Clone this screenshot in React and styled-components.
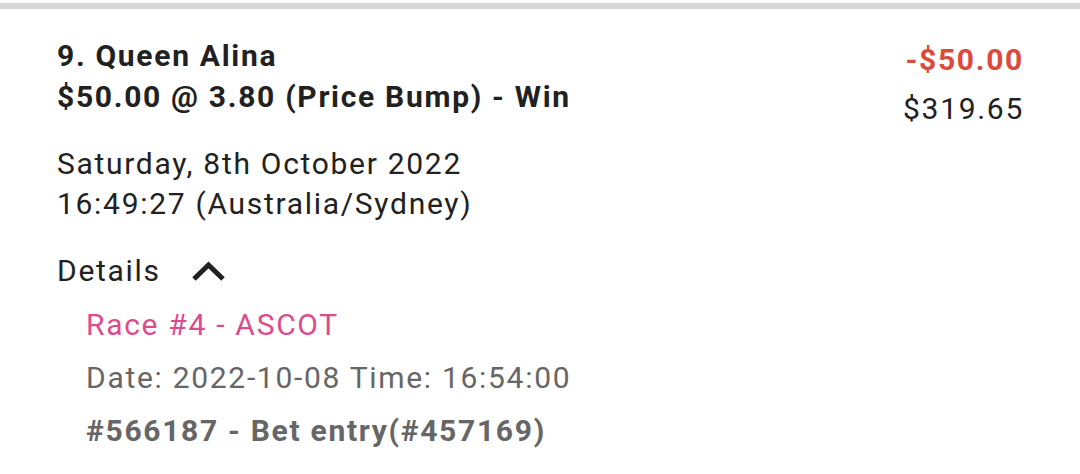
import React from 'react'
import styled, { createGlobalStyle } from 'styled-components'

const GlobalStyle = createGlobalStyle`
  html, body {
    margin: 0;
    padding: 0;
    background: #fff;
  }
  body {
    font-family: Roboto, 'Liberation Sans', sans-serif;
    font-size: 30px;
    letter-spacing: 1.7px;
    color: #212121;
  }
`

const Card = styled.div`
  margin-top: 3px;
  border-top: 6px solid #d6d6d6;
  padding: 26px 56px 0 57px;
`

const Header = styled.div`
  display: flex;
  justify-content: space-between;
  align-items: flex-start;
`

const Title = styled.div`
  font-weight: 700;
  line-height: 41px;
`

const Amounts = styled.div`
  display: flex;
  flex-direction: column;
  align-items: flex-end;
  line-height: 49px;
`

const Amount = styled.span`
  color: ${(p) => (p.loss ? '#db4a3c' : '#212121')};
  font-weight: ${(p) => (p.loss ? 700 : 400)};
`

const Placed = styled.div`
  margin-top: 11px;
  line-height: 40px;
`

const Toggle = styled.div`
  display: flex;
  align-items: center;
  gap: 30px;
  margin-top: 28px;
  line-height: 38px;
`

const Chevron = () => (
  <svg width='35' height='22' viewBox='0 0 35 22'>
    <polyline
      points='3,19 17.5,5 32,19'
      fill='none'
      stroke='#212121'
      strokeWidth='5'
    />
  </svg>
)

const DetailList = styled.div`
  padding-left: 29px;
  margin-top: 8px;
`

const DetailLine = styled.div`
  line-height: 53px;
  color: ${(p) => (p.accent ? '#dc4b8d' : '#666')};
  font-weight: ${(p) => (p.bold ? 700 : 400)};
`

export default function App() {
  return (
    <>
      <GlobalStyle />
      <Card>
        <Header>
          <Title>
            <div>9. Queen Alina</div>
            <div>$50.00 @ 3.80 (Price Bump) - Win</div>
          </Title>
          <Amounts>
            <Amount loss>-$50.00</Amount>
            <Amount>$319.65</Amount>
          </Amounts>
        </Header>
        <Placed>
          <div>Saturday, 8th October 2022</div>
          <div>16:49:27 (Australia/Sydney)</div>
        </Placed>
        <Toggle>
          <span>Details</span>
          <Chevron />
        </Toggle>
        <DetailList>
          <DetailLine accent>Race #4 - ASCOT</DetailLine>
          <DetailLine>Date: 2022-10-08 Time: 16:54:00</DetailLine>
          <DetailLine bold>#566187 - Bet entry(#457169)</DetailLine>
        </DetailList>
      </Card>
    </>
  )
}
